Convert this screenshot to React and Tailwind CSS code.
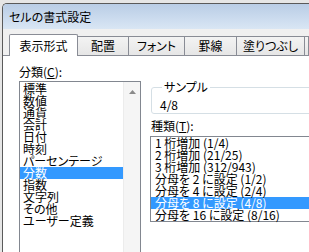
export default function App() {
  const cats = ["標準", "数値", "通貨", "会計", "日付", "時刻", "パーセンテージ", "分数", "指数", "文字列", "その他", "ユーザー定義"];
  const types = [
    "1 桁増加 (1/4)",
    "2 桁増加 (21/25)",
    "3 桁増加 (312/943)",
    "分母を 2 に設定 (1/2)",
    "分母を 4 に設定 (2/4)",
    "分母を 8 に設定 (4/8)",
    "分母を 16 に設定 (8/16)",
  ];
  return (
    <div className="w-[309px] h-[252px] overflow-hidden bg-[#e6e6e6] pl-[2px] pt-[3px] text-[12px] leading-[12px] text-black [font-family:'Noto_Sans_CJK_JP',sans-serif] [font-feature-settings:'palt']">
      <div className="w-[320px] h-[260px] border-l border-t border-[#5a5a5a] rounded-tl-[5px] bg-[#f0f0f0] flex flex-col overflow-hidden">
        <div className="h-[25px] shrink-0 bg-linear-to-b from-[#b9cde6] to-[#d9e6f4] flex items-center pl-[6px]">
          セルの書式設定
        </div>
        <div className="h-[5px] shrink-0" />
        <div className="flex items-end h-[22px] shrink-0 pl-[6px] relative z-10">
          <div className="w-[69px] h-[22px] bg-white border-l border-t border-r border-[#898c95] flex items-center justify-center rounded-t-[2px]">
            表示形式
          </div>
          <div className="w-[51px] h-[19px] mb-px bg-linear-to-b from-[#f3f3f3] to-[#e6e6e6] border-t border-r border-[#898c95] flex items-center justify-center">
            配置
          </div>
          <div className="w-[56px] h-[19px] mb-px bg-linear-to-b from-[#f3f3f3] to-[#e6e6e6] border-t border-r border-[#898c95] flex items-center justify-center">
            フォント
          </div>
          <div className="w-[52px] h-[19px] mb-px bg-linear-to-b from-[#f3f3f3] to-[#e6e6e6] border-t border-r border-[#898c95] flex items-center justify-center">
            罫線
          </div>
          <div className="w-[68px] h-[19px] mb-px bg-linear-to-b from-[#f3f3f3] to-[#e6e6e6] border-t border-r border-[#898c95] flex items-center justify-center">
            塗りつぶし
          </div>
          <div className="w-[4px] h-[19px] mb-px bg-linear-to-b from-[#f3f3f3] to-[#e6e6e6] border-t border-r border-[#898c95]" />
        </div>
        <div className="-mt-px flex-1 bg-white border-t border-[#898c95] flex pl-[16px] pt-[10px]">
          <div className="w-[122px] shrink-0 flex flex-col">
            <div className="h-[12px]">
              分類(<u>C</u>):
            </div>
            <div className="mt-[3px] h-[200px] border border-[#828790] flex">
              <div className="flex-1 pt-px">
                {cats.map((c, i) => (
                  <div
                    key={c}
                    className={
                      i === 7
                        ? "h-[12px] pl-[3px] bg-[#3399ff] text-white whitespace-nowrap"
                        : "h-[12px] pl-[3px] whitespace-nowrap"
                    }
                  >
                    {c}
                  </div>
                ))}
              </div>
              <div className="w-[17px] shrink-0 bg-[#f5f5f5] border-l border-[#ececec] flex justify-center pt-[8px]">
                <svg width="7" height="4" viewBox="0 0 7 4">
                  <path d="M3.5 0 L7 4 L0 4 Z" fill="#8a8a8a" />
                </svg>
              </div>
            </div>
          </div>
          <div className="w-[200px] shrink-0 ml-[9px] pt-[15px] flex flex-col">
            <fieldset className="h-[33px] ml-px border border-[#d5dfe5] rounded-[3px] pl-[8px]">
              <legend className="ml-[2px] px-[2px] leading-[12px]">サンプル</legend>
              <div className="mt-[6px] leading-[12px]">4/8</div>
            </fieldset>
            <div className="mt-[6px] ml-px h-[12px]">
              種類(<u>T</u>):
            </div>
            <div className="mt-[4px] border border-[#828790]">
              {types.map((t, i) => (
                <div
                  key={t}
                  className={
                    i === 5
                      ? "h-[12px] pl-[4px] bg-[#3399ff] text-white whitespace-nowrap"
                      : "h-[12px] pl-[4px] whitespace-nowrap"
                  }
                >
                  {t}
                </div>
              ))}
            </div>
          </div>
        </div>
      </div>
    </div>
  );
}
